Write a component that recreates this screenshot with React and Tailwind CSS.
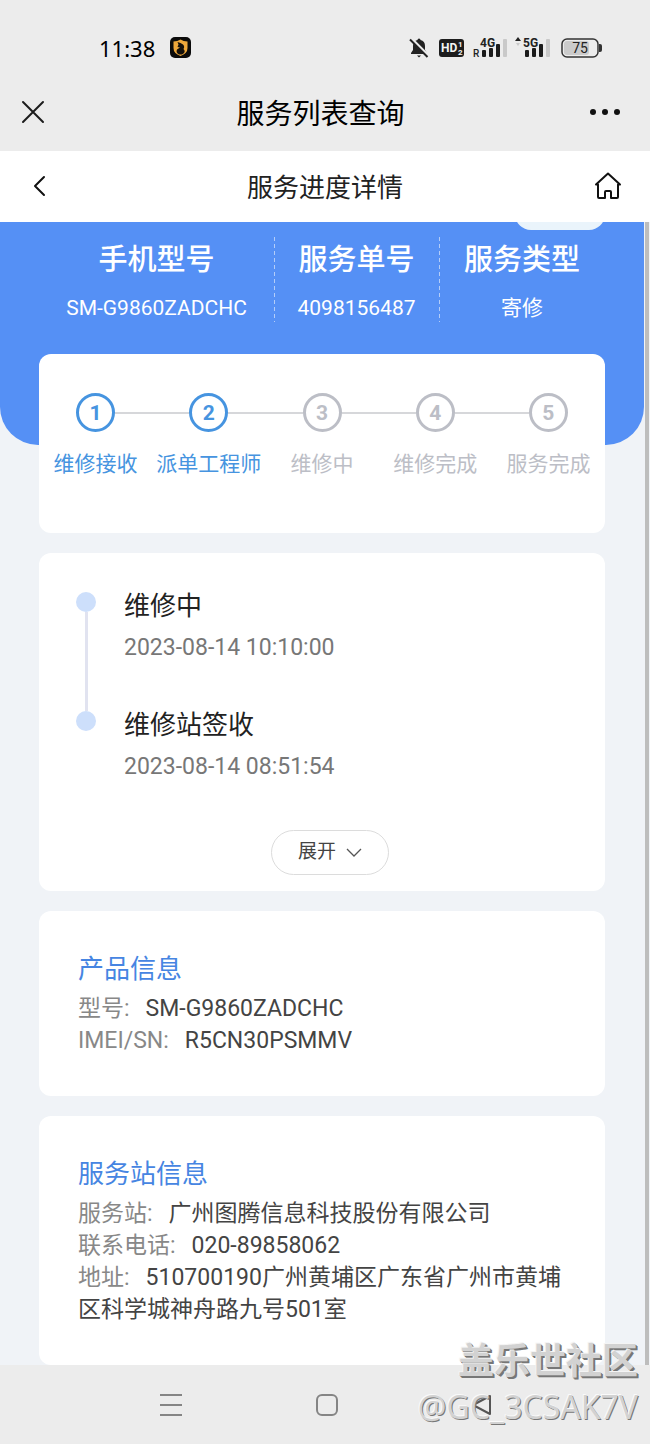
import React from 'react'

const summary = [
  { label: '手机型号', value: 'SM-G9860ZADCHC', width: 'flex-[235]' },
  { label: '服务单号', value: '4098156487', width: 'flex-[165]' },
  { label: '服务类型', value: '寄修', width: 'flex-[166]' },
]

const steps = [
  { label: '维修接收', done: true },
  { label: '派单工程师', done: true },
  { label: '维修中', done: false },
  { label: '维修完成', done: false },
  { label: '服务完成', done: false },
]

const events = [
  { title: '维修中', time: '2023-08-14 10:10:00' },
  { title: '维修站签收', time: '2023-08-14 08:51:54' },
]

function Signal({ type, children }) {
  return (
    <svg width="36" height="24" viewBox="0 0 36 24" aria-label={type}>
      {children}
      <text x="8" y="11" fontSize="12" fontWeight="700" fontFamily="Roboto" fill="#222">
        {type}
      </text>
      <rect x="10" y="14" width="4" height="7" rx="1" fill="#1c1c1c" />
      <rect x="17" y="12" width="4" height="9" rx="1" fill="#1c1c1c" />
      <rect x="24" y="8" width="4" height="13" rx="1" fill="#1c1c1c" />
      <rect x="31" y="3" width="4" height="18" rx="1" fill="#c9c9c9" />
    </svg>
  )
}

function StatusBar() {
  return (
    <div className="flex h-[75px] items-center pt-[23px] pr-12 pb-[3px] pl-[99px]">
      <span className="font-['Noto_Sans',sans-serif] text-[22px] leading-6 text-black">11:38</span>
      <svg className="ml-3.5" width="23" height="23" viewBox="0 0 23 23">
        <rect x="1" y="1" width="21" height="21" rx="5" fill="#0b0b0b" />
        <path d="M4.500 5.500 Q8.500 5.500 11.500 3.500 Q14.500 5.500 18.500 5.500 V12 Q18.500 17.500 11.500 20 Q4.500 17.500 4.500 12 Z" fill="#eda73a" />
        <path d="M8.500 6 L11.500 7 L14 8.500 Q16 10.500 14.500 13 Q17.500 16 13 18.500 L10 18.500 Q6.500 16.500 8 13.500 L11 11.500 L8.500 11 L9.500 8.500 Z" fill="#14100b" />
      </svg>
      <div className="ml-auto flex items-center">
        <svg className="mr-2.5" width="20" height="22" viewBox="0 0 20 22">
          <path d="M10 1.500 Q11.500 1.500 11.500 3 Q16 4 16 9 V13 L18 16 V17 H2 V16 L4 13 V9 Q4 4 8.500 3 Q8.500 1.500 10 1.500 Z" fill="#222" />
          <path d="M8 18.500 H12 L10 20.500 Z" fill="#222" />
          <path d="M1.500 0.500 L20 19" stroke="#ececec" strokeWidth="2.500" />
          <path d="M1 2.500 L18.500 20" stroke="#222" strokeWidth="2" />
        </svg>
        <svg className="mr-2" width="25" height="18" viewBox="0 0 25 18">
          <rect width="25" height="18" rx="3" fill="#1d1d1d" />
          <text x="2" y="13" fontSize="12" fontWeight="700" fontFamily="Roboto" fill="#f5f5f5">HD</text>
          <text x="19" y="8" fontSize="8" fontWeight="700" fontFamily="Roboto" fill="#f5f5f5">1</text>
          <text x="19" y="16" fontSize="8" fontWeight="700" fontFamily="Roboto" fill="#f5f5f5">2</text>
        </svg>
        <Signal type="4G">
          <text x="1" y="21" fontSize="10" fontWeight="500" fontFamily="Roboto" fill="#222">R</text>
        </Signal>
        <span className="w-[7px]" />
        <Signal type="5G">
          <path d="M0 5 L3 1 L6 5 Z" fill="#222" />
          <path d="M1 7 L3 10 L5 7 Z" fill="#c9c9c9" />
        </Signal>
        <svg className="ml-2.5" width="41" height="20" viewBox="0 0 41 20">
          <rect x="3" y="3" width="25" height="14" rx="3" fill="#cbcbcb" />
          <rect x="1" y="1" width="36" height="18" rx="5" fill="none" stroke="#333" strokeWidth="1.500" />
          <path d="M38 6 H39 Q41 6 41 8 V12 Q41 14 39 14 H38 Z" fill="#333" />
          <text x="19" y="15" textAnchor="middle" fontSize="14" fontFamily="Roboto" fill="#222">75</text>
        </svg>
      </div>
    </div>
  )
}

function TitleBar() {
  return (
    <div className="flex h-[76px] items-center justify-between pr-[29px] pb-0.5 pl-5">
      <button type="button" aria-label="关闭" className="w-8">
        <svg width="26" height="26" viewBox="0 0 26 26" fill="none" stroke="#1c1c1c" strokeWidth="2" strokeLinecap="round">
          <path d="M3 3 L23 23 M23 3 L3 23" />
        </svg>
      </button>
      <h1 className="pt-1.5 text-[28px] leading-9 text-black">服务列表查询</h1>
      <button type="button" aria-label="更多">
        <svg width="32" height="8" viewBox="0 0 32 8" fill="#111">
          <circle cx="4" cy="4" r="3" />
          <circle cx="16" cy="4" r="3" />
          <circle cx="28" cy="4" r="3" />
        </svg>
      </button>
    </div>
  )
}

function PageHeader() {
  return (
    <div className="flex h-[71px] items-center justify-between bg-white pr-7 pb-0.5 pl-7">
      <button type="button" aria-label="返回" className="w-7">
        <svg width="22" height="24" viewBox="0 0 22 24" fill="none" stroke="#111" strokeWidth="2" strokeLinecap="round" strokeLinejoin="round">
          <path d="M16 3 L7 12 L16 21" />
        </svg>
      </button>
      <h2 className="pt-1 text-[26px] leading-9 text-[#222]">服务进度详情</h2>
      <button type="button" aria-label="首页">
        <svg width="28" height="28" viewBox="0 0 28 28" fill="none" stroke="#111" strokeWidth="2" strokeLinejoin="round" strokeLinecap="round">
          <path d="M4 12.500 H2 L14 1.500 L26 12.500 H24 V25 Q24 26 23 26 H17 V20 Q17 19 16 19 H12 Q11 19 11 20 V26 H5 Q4 26 4 25 Z" />
        </svg>
      </button>
    </div>
  )
}

function Summary() {
  return (
    <section className="relative h-[223px] overflow-hidden rounded-b-[38px] bg-[#5590f5] px-[39px] pt-[15px]">
      <div className="absolute -top-8 right-[39px] h-10 w-[90px] rounded-2xl bg-[#eaf4fb]" />
      <dl className="flex text-center text-white">
        {summary.map((s, i) => (
          <div key={s.label} className={`${s.width} relative h-[85px]`}>
            {i > 0 ? (
              <svg className="absolute top-0 left-0 h-full w-px" aria-hidden="true">
                <path d="M0.500 0 V85" stroke="#b4cdf8" strokeWidth="1" strokeDasharray="4 3" />
              </svg>
            ) : null}
            <dt className="pt-0.5 text-[29px] leading-[42px] font-medium">{s.label}</dt>
            <dd className="mt-[11px] text-[21px] leading-8">{s.value}</dd>
          </div>
        ))}
      </dl>
    </section>
  )
}

function Steps() {
  return (
    <ol className="relative mx-[39px] -mt-[91px] grid h-[179px] grid-cols-5 rounded-xl bg-white pt-[39px]">
      {steps.map((s, i) => (
        <li key={s.label} className={s.done ? 'text-[#4694e0]' : 'text-[#bcbec6]'}>
          <div className="flex items-center">
            <span className={i === 0 ? 'h-px flex-1' : 'h-[2px] flex-1 bg-[#d6d7da]'} />
            <span className="flex size-[39px] items-center justify-center rounded-full border-3 border-current text-[21px] leading-6 font-bold">
              {i + 1}
            </span>
            <span className={i === steps.length - 1 ? 'h-px flex-1' : 'h-[2px] flex-1 bg-[#d6d7da]'} />
          </div>
          <div className="mt-4 text-center text-[21px] leading-8 whitespace-nowrap">{s.label}</div>
        </li>
      ))}
    </ol>
  )
}

function Timeline() {
  return (
    <section className="mx-[39px] mt-5 rounded-xl bg-white pt-[34px] pb-4">
      <ol>
        {events.map((e, i) => (
          <li key={e.title} className="flex h-[119px] pl-[37px]">
            <div className="flex w-5 flex-col items-center pt-[5px]">
              <span className="size-[20px] shrink-0 rounded-full bg-[#cddffb]" />
              {i < events.length - 1 ? <span className="-mb-[5px] w-[3px] flex-1 bg-[#e1e3f0]" /> : null}
            </div>
            <div className="ml-7 pt-px">
              <h3 className="text-[26px] leading-9 text-[#222]">{e.title}</h3>
              <time className="mt-2 block text-[23px] leading-8 text-[#777]">{e.time}</time>
            </div>
          </li>
        ))}
      </ol>
      <div className="mt-[5px] flex justify-center pl-4">
        <button
          type="button"
          className="flex h-[45px] w-[118px] items-center justify-center gap-2.5 rounded-full border border-[#dcdcdc] text-[19px] text-[#444]"
        >
          展开
          <svg width="16" height="10" viewBox="0 0 16 10" fill="none" stroke="#555" strokeWidth="1.300">
            <path d="M1 1 L8 8 L15 1" />
          </svg>
        </button>
      </div>
    </section>
  )
}

function InfoRow({ label, children }) {
  return (
    <div className="text-[23px] leading-8">
      <dt className="mr-4 inline text-[#888]">{label}:</dt>
      <dd className="inline text-[#444]">{children}</dd>
    </div>
  )
}

function InfoCard({ title, children }) {
  return (
    <section className="mx-[39px] mt-5 rounded-xl bg-white px-[39px] pt-10 pb-[39px]">
      <h3 className="text-[26px] leading-9 text-[#4685e2]">{title}</h3>
      <dl className="mt-1.5">{children}</dl>
    </section>
  )
}

function NavBar() {
  return (
    <nav className="flex h-[79px] items-center justify-between bg-[#ececec] pr-[155px] pl-[158px]">
      <button type="button" aria-label="最近任务">
        <svg width="26" height="26" viewBox="0 0 26 26" stroke="#858585" strokeWidth="2">
          <path d="M2 3 H24 M2 13 H24 M2 23 H24" />
        </svg>
      </button>
      <button type="button" aria-label="主屏幕">
        <svg width="26" height="26" viewBox="0 0 26 26" fill="none" stroke="#858585" strokeWidth="2">
          <rect x="3" y="3" width="20" height="20" rx="5" />
        </svg>
      </button>
      <button type="button" aria-label="后退">
        <svg width="26" height="26" viewBox="0 0 26 26" fill="none" stroke="#555" strokeWidth="2" strokeLinejoin="round">
          <path d="M21 4 V22 L4 13 Z" />
        </svg>
      </button>
    </nav>
  )
}

export default function App() {
  return (
    <div className="relative bg-[#f0f3f7] font-['Roboto','Noto_Sans_CJK_SC',sans-serif]">
      <header className="bg-[#ececec]">
        <StatusBar />
        <TitleBar />
      </header>
      <PageHeader />
      <div className="flex">
        <main className="min-w-0 flex-1">
          <Summary />
          <Steps />
          <Timeline />
          <InfoCard title="产品信息">
            <InfoRow label="型号">SM-G9860ZADCHC</InfoRow>
            <InfoRow label="IMEI/SN">R5CN30PSMMV</InfoRow>
          </InfoCard>
          <InfoCard title="服务站信息">
            <InfoRow label="服务站">广州图腾信息科技股份有限公司</InfoRow>
            <InfoRow label="联系电话">020-89858062</InfoRow>
            <InfoRow label="地址">510700190广州黄埔区广东省广州市黄埔区科学城神舟路九号501室</InfoRow>
          </InfoCard>
        </main>
        <div className="w-1.5 pl-px">
          <div className="h-full w-1 bg-[#bdbdbd]" />
        </div>
      </div>
      <NavBar />
      <div className="pointer-events-none absolute right-3 bottom-[15px] text-right font-['Noto_Sans','Noto_Sans_CJK_SC',sans-serif] text-[#d2d2d2]">
        <div className="text-[36px] leading-[48px] font-bold [text-shadow:-1px_-1px_0_#f4f4f4,1px_1px_0_#777,2px_2px_0_#777]">盖乐世社区</div>
        <div className="text-[32px] leading-[44px] [text-shadow:-1px_-1px_0_#fafafa,1px_1px_0_#777]">@GC_3CSAK7V</div>
      </div>
    </div>
  )
}
